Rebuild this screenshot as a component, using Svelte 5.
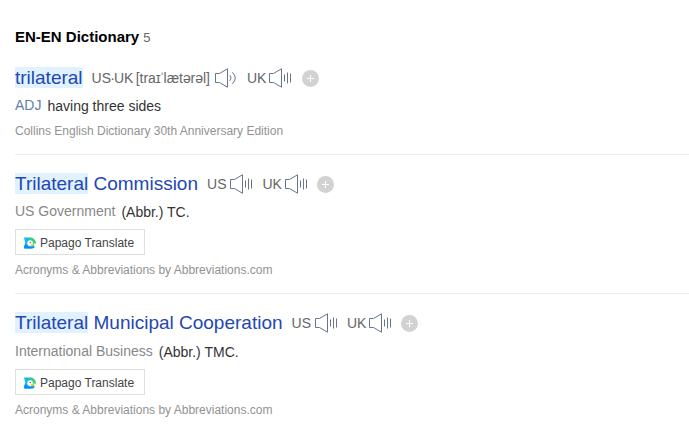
<script>
  const entries = [
    {
      hit: 'trilateral', rest: '', phonetic: true,
      tag: 'ADJ', tagKind: 'pos', meaning: 'having three sides', translate: false,
      source: 'Collins English Dictionary 30th Anniversary Edition'
    },
    {
      hit: 'Trilateral', rest: ' Commission', phonetic: false,
      tag: 'US Government', tagKind: 'field', meaning: '(Abbr.) TC.', translate: true,
      source: 'Acronyms & Abbreviations by Abbreviations.com'
    },
    {
      hit: 'Trilateral', rest: ' Municipal Cooperation', phonetic: false,
      tag: 'International Business', tagKind: 'field', meaning: '(Abbr.) TMC.', translate: true,
      source: 'Acronyms & Abbreviations by Abbreviations.com'
    }
  ];
</script>

{#snippet speaker(waves)}
  <svg class="speaker" class:waves width="24" height="20" viewBox="0 0 24 20" fill="none" stroke="#66748c" stroke-width="1">
    <path d="M5.5 5.5H1.5V14.5H5.5L13.5 19.2V.8L5.5 5.5" />
    {#if waves}
      <path d="M15.8 7.2Q18.4 10 15.8 12.8M18.3 4.3Q24.3 10 18.3 15.7" />
    {:else}
      <path d="M16.5 6.5V13.5M19.5 4.5V15.5M22.5 5.5V14.5" />
    {/if}
  </svg>
{/snippet}

<main>
  <h2>EN-EN Dictionary <span>5</span></h2>
  {#each entries as e}
    <article>
      <div class="head">
        <span class="word"><mark>{e.hit}</mark>{e.rest}</span>
        {#if e.phonetic}
          <span class="accent">US<span class="dot">·</span>UK <span class="ipa">[traɪ<span class="stress">ˈ</span>lætərəl]</span></span>
        {:else}
          <span class="accent">US</span>
        {/if}
        {@render speaker(e.phonetic)}
        <span class="accent uk">UK</span>
        {@render speaker(false)}
        <svg class="add" width="17" height="17" viewBox="0 0 17 17">
          <circle cx="8.5" cy="8.5" r="8.5" fill="#d2d2d2" />
          <path d="M8.5 5v7M5 8.5h7" stroke="#fff" />
        </svg>
      </div>
      <div class="meaning"><span class={e.tagKind}>{e.tag}</span><span class="text">{e.meaning}</span></div>
      {#if e.translate}
        <button>
          <svg width="12" height="12" viewBox="0 0 12 12">
            <path d="M0 .5H6Q11 .5 11.8 6.2H9.4Q10 9 11 10Q9.5 11.5 7 11.5H1Q0 11.5 0 10.5L1.3 6Z" fill="#16b8f2" />
            <path d="M4.5 .9Q11-.4 12 6.5H8.4L6 3Z" fill="#3bcf72" />
            <path d="M1 6.5Q3 10.5 8 9.8L10.5 10.3Q9 11.5 7 11.5H1Q0 11.5 0 10.5Z" fill="#0a8bef" />
            <circle cx="6.1" cy="6.1" r="2.8" fill="#fff" />
            <circle cx="6.3" cy="5.6" r=".7" fill="#234d79" />
            <path d="M7 6.8H10.6Q9.8 9.3 6.6 9.2Z" fill="#ffd21b" />
          </svg>
          <span>Papago Translate</span>
        </button>
      {/if}
      <div class="source">{e.source}</div>
    </article>
  {/each}
</main>

<style>
  :global(body) { background: #fff; overflow: hidden; }
  main {
    box-sizing: border-box;
    height: 447px;
    padding: 26px 0 0 15px;
    overflow: hidden;
    font-family: "Liberation Sans", Arial, sans-serif;
  }
  h2 { margin: 0; height: 23px; line-height: 22px; font-size: 15px; color: #000; white-space: nowrap; }
  h2 span { font-size: 13px; font-weight: 400; color: #666; }
  article { padding: 17px 0 15px; border-bottom: 1px solid #ededed; }
  article:last-child { border: 0; }
  .head { display: flex; align-items: center; height: 24px; white-space: nowrap; }
  .word { font-size: 19px; line-height: 22px; color: #2347b3; margin-right: 9px; }
  mark { background: #e0f2ff; color: inherit; }
  .accent { font-size: 14px; line-height: 20px; color: #666; }
  .dot { margin: 0 -0.9px; }
  .ipa { margin-left: -1.5px; letter-spacing: -0.05px; }
  .stress { margin: 0 -0.9px; line-height: 0; }
  .speaker { margin-left: 3px; flex: none; }
  .waves { margin-left: 4px; }
  .uk { margin-left: 9px; }
  .uk + .speaker { margin-left: 2px; }
  .add { margin-left: 9px; flex: none; }
  .waves ~ .add { margin-left: 10px; }
  .meaning { display: flex; height: 22px; margin-top: 4px; line-height: 22px; font-size: 14px; white-space: nowrap; }
  article:last-child .meaning { margin-top: 5px; }
  .pos { color: #5f7fa8; }
  .field { color: #888; }
  .text { margin-left: 6px; padding-top: 1px; color: #333; }
  button {
    display: flex; align-items: center; gap: 4px; box-sizing: border-box;
    width: 130px; height: 26px; margin: 7px 0 0; padding: 1px 0 0 8px;
    border: 1px solid #dfdfdf; background: #fff; color: #444;
    font: 12px/24px "Liberation Sans", Arial, sans-serif; white-space: nowrap;
  }
  button span { padding-top: 1px; }
  .source { height: 16px; line-height: 16px; margin-top: 7px; font-size: 12px; color: #929292; }
</style>
